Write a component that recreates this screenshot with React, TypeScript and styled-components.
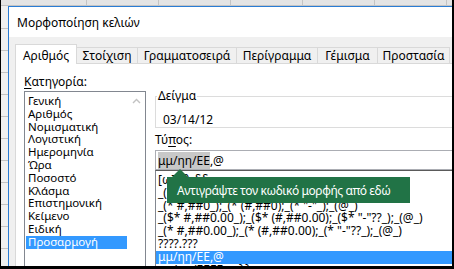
import styled, { createGlobalStyle } from "styled-components";

const GlobalStyle = createGlobalStyle`
  html, body {
    margin: 0;
    padding: 0;
    background: #fff;
  }
  body {
    font-family: "Noto Sans", "Open Sans", sans-serif;
    color: #000;
  }
`;

const Screen = styled.div`
  width: 454px;
  height: 269px;
  box-sizing: border-box;
  border-left: 1px solid #000;
  border-right: 2px solid #000;
  border-bottom: 3px solid #000;
  overflow: hidden;
  display: grid;
  grid-template-columns: 7px 1fr;
  grid-template-rows: 6px 1fr;
`;

const ColumnHeader = styled.div`
  grid-column: 1 / -1;
  background-color: #e4e4e4;
  background-image: repeating-linear-gradient(
    to right,
    transparent 0 71px,
    #c4c4c4 71px 72px
  );
  background-position: 14px 0;
  border-bottom: 1px solid #c4c4c4;
  box-sizing: border-box;
`;

const RowHeader = styled.div`
  background-color: #f0f0f0;
  background-image: repeating-linear-gradient(
    to bottom,
    transparent 0 21px,
    #c4c4c4 21px 22px
  );
  background-position: 0 1px;
`;

const Dialog = styled.div`
  border-top: 1px solid #2b7cd3;
  border-left: 1px solid #2b7cd3;
  background: #fff;
  display: flex;
  flex-direction: column;
  min-width: 0;
`;

const TitleBar = styled.div`
  height: 30px;
  display: flex;
  align-items: center;
  padding-left: 8px;
  font-size: 12px;
  color: #000;
`;

const Body = styled.div`
  flex: 1;
  background: #f0f0f0;
  padding: 8px 0 0 6px;
  display: flex;
  flex-direction: column;
`;

const TabRow = styled.div`
  height: 19px;
  display: flex;
  align-items: flex-end;
`;

const Tab = styled.div<{ $w: number; $active?: boolean }>`
  width: ${(p) => p.$w}px;
  height: ${(p) => (p.$active ? 20 : 17)}px;
  box-sizing: border-box;
  flex: none;
  display: flex;
  align-items: center;
  justify-content: center;
  font-size: 12px;
  background: ${(p) => (p.$active ? "#fff" : "#f0f0f0")};
  border: 1px solid #d9d9d9;
  border-left: ${(p) => (p.$active ? "1px solid #d9d9d9" : "none")};
  border-bottom: ${(p) => (p.$active ? "none" : "1px solid #d9d9d9")};
  position: relative;
  z-index: ${(p) => (p.$active ? 1 : 0)};
  padding-top: ${(p) => (p.$active ? 1 : 0)}px;
`;

const Panel = styled.div`
  flex: 1;
  background: #fff;
  border-left: 1px solid #d9d9d9;
  border-top: 1px solid #d9d9d9;
  margin-top: -1px;
  display: flex;
  gap: 9px;
  padding: 10px 0 0 8px;
`;

const Column = styled.div<{ $w: number }>`
  width: ${(p) => p.$w}px;
  flex: none;
  display: flex;
  flex-direction: column;
`;

const Label = styled.div`
  font-size: 12px;
  line-height: 16px;
  height: 16px;
  u {
    text-decoration: underline;
    text-underline-offset: 2px;
  }
`;

const ListBox = styled.div`
  margin-top: 1px;
  flex: 1;
  border: 1px solid #828790;
  border-bottom: none;
  display: flex;
`;

const ListItems = styled.div`
  flex: 1;
  padding: 3px 0 0 1px;
`;

const Item = styled.div<{ $selected?: boolean; $size?: number }>`
  height: 12.8px;
  line-height: 12.8px;
  font-size: ${(p) => p.$size ?? 11.5}px;
  padding-left: 2px;
  white-space: nowrap;
  background: ${(p) => (p.$selected ? "#3399ff" : "transparent")};
  color: ${(p) => (p.$selected ? "#fff" : "#000")};
`;

const ScrollTrack = styled.div`
  width: 18px;
  display: flex;
  justify-content: center;
  padding-top: 6px;
`;

const Sample = styled.fieldset`
  margin: 15px 0 0;
  padding: 8px 0 0 7px;
  border: 1px solid #dcdcdc;
  border-right: none;
  legend {
    font-size: 12px;
    line-height: 14px;
    padding: 0 1px;
    margin-left: -6px;
  }
`;

const SampleValue = styled.div`
  font-size: 12px;
  line-height: 15px;
  padding-top: 1px;
`;

const TypeLabel = styled(Label)`
  margin-top: 4px;
`;

const TypeInput = styled.div`
  margin-top: 2px;
  height: 20px;
  box-sizing: border-box;
  border: 1px solid #abadb3;
  border-right: none;
  display: flex;
  align-items: center;
  padding-left: 2px;
  font-size: 12px;
  mark {
    background: #c8c8c8;
    color: #000;
  }
`;

const FormatList = styled.div`
  position: relative;
  border-left: 1px solid #828790;
  border-top: 1px solid #5a5a5a;
  padding-top: 3px;
  flex: 1;
`;

const Callout = styled.div`
  position: absolute;
  left: 11px;
  top: 6px;
  width: 243px;
  height: 26px;
  background: #217346;
  color: #fff;
  font-size: 12px;
  letter-spacing: -0.4px;
  display: flex;
  align-items: center;
  padding-left: 10px;
  box-sizing: border-box;
  white-space: nowrap;
  &::before {
    content: "";
    position: absolute;
    left: 5px;
    top: -8px;
    border-left: 8px solid transparent;
    border-right: 8px solid transparent;
    border-bottom: 8px solid #217346;
  }
`;

const categories = [
  "Γενική",
  "Αριθμός",
  "Νομισματική",
  "Λογιστική",
  "Ημερομηνία",
  "Ώρα",
  "Ποσοστό",
  "Κλάσμα",
  "Επιστημονική",
  "Κείμενο",
  "Ειδική",
  "Προσαρμογή",
];

const formats = [
  "[ω]:λλ:δδ",
  '_($* #,##0_);_($* (#,##0);_($* "-"_);_(@_)',
  '_(* #,##0_);_(* (#,##0);_(* "-"_);_(@_)',
  '_($* #,##0.00_);_($* (#,##0.00);_($* "-"??_);_(@_)',
  '_(* #,##0.00_);_(* (#,##0.00);_(* "-"??_);_(@_)',
  "????.???",
  "μμ/ηη/ΕΕ,@",
  "ηη/μμ/ΕΕΕΕ ω:λλ",
];

const tabs = [
  { name: "Αριθμός", w: 62 },
  { name: "Στοίχιση", w: 61 },
  { name: "Γραμματοσειρά", w: 99 },
  { name: "Περίγραμμα", w: 81 },
  { name: "Γέμισμα", w: 60 },
  { name: "Προστασία", w: 72 },
];

export default function App() {
  return (
    <>
      <GlobalStyle />
      <Screen>
        <ColumnHeader />
        <RowHeader />
        <Dialog>
          <TitleBar>Μορφοποίηση κελιών</TitleBar>
          <Body>
            <TabRow>
              {tabs.map((t, i) => (
                <Tab key={t.name} $w={t.w} $active={i === 0}>
                  {t.name}
                </Tab>
              ))}
            </TabRow>
            <Panel>
              <Column $w={122}>
                <Label>
                  <u>Κ</u>ατηγορία:
                </Label>
                <ListBox>
                  <ListItems>
                    {categories.map((c) => (
                      <Item key={c} $selected={c === "Προσαρμογή"}>
                        {c}
                      </Item>
                    ))}
                  </ListItems>
                  <ScrollTrack>
                    <svg width="9" height="6" viewBox="0 0 9 6">
                      <path d="M1 5 L4.5 1.5 L8 5" fill="none" stroke="#c2c2c2" strokeWidth="1.4" />
                    </svg>
                  </ScrollTrack>
                </ListBox>
              </Column>
              <Column $w={320}>
                <Sample>
                  <legend>Δείγμα</legend>
                  <SampleValue>03/14/12</SampleValue>
                </Sample>
                <TypeLabel>
                  Τύ<u>π</u>ος:
                </TypeLabel>
                <TypeInput>
                  <mark>μμ/ηη/ΕΕ</mark>,@
                </TypeInput>
                <FormatList>
                  {formats.map((f) => (
                    <Item key={f} $size={12} $selected={f === "μμ/ηη/ΕΕ,@"}>
                      {f}
                    </Item>
                  ))}
                  <Callout>Αντιγράψτε τον κωδικό μορφής από εδώ</Callout>
                </FormatList>
              </Column>
            </Panel>
          </Body>
        </Dialog>
      </Screen>
    </>
  );
}
